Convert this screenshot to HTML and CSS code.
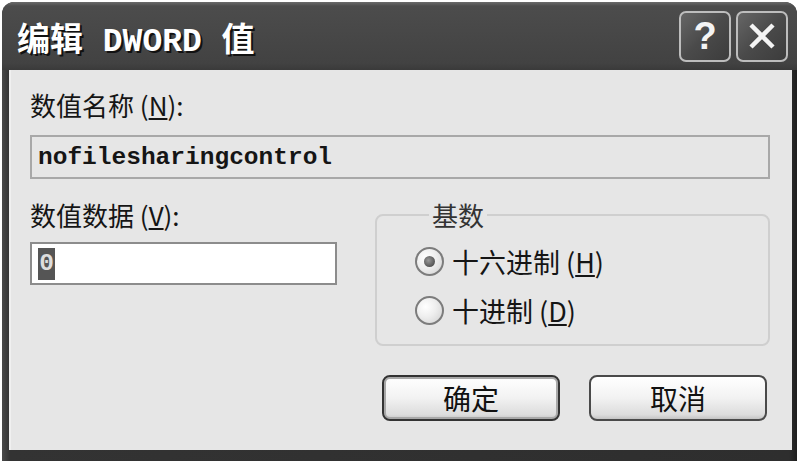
FILE: index.html
```html
<!DOCTYPE html>
<html lang="zh-CN">
<head>
  <meta charset="UTF-8" />
  <title>编辑 DWORD 值</title>
  <link rel="stylesheet" href="styles.css">
</head>
<body>
  <div class="window">
    <div class="titlebar">
      <div class="title">编辑 DWORD 值</div>
      <div class="caption-btns">
        <div class="cap-btn help">?</div>
        <div class="cap-btn close">
          <svg width="28" height="26" viewBox="0 0 28 26">
            <path d="M3 2 L25 24 M25 2 L3 24" stroke="#f4f4f4" stroke-width="4.5" fill="none"/>
          </svg>
        </div>
      </div>
    </div>
    <div class="client">
      <div class="label">数值名称 (<u>N</u>):</div>
      <div class="textbox readonly">nofilesharingcontrol</div>
      <div class="row">
        <div class="col-left">
          <div class="label">数值数据 (<u>V</u>):</div>
          <div class="textbox data"><span class="sel">0</span></div>
        </div>
        <fieldset class="group">
          <legend>基数</legend>
          <div class="radio"><span class="dot checked"></span><span>十六进制 (<u>H</u>)</span></div>
          <div class="radio"><span class="dot"></span><span>十进制 (<u>D</u>)</span></div>
        </fieldset>
      </div>
      <div class="buttons">
        <div class="btn default">确定</div>
        <div class="btn">取消</div>
      </div>
    </div>
  </div>
</body>
</html>
```

FILE: styles.css
```css
* {
  box-sizing: border-box;
}
body {
  margin: 0;
  background: #fff;
  font-family: "Noto Sans CJK SC", sans-serif;
  color: #151515;
}
.window {
  margin: 2px 0 0 2px;
  width: 795px;
  height: 459px;
  background: linear-gradient(90deg, #4a4a4a 0, #333 1%, #2e2e2e 99%, #1e1e1e 100%);
  border-radius: 12px 12px 0 0;
  display: flex;
  flex-direction: column;
  overflow: hidden;
}
.titlebar {
  height: 68px;
  display: flex;
  align-items: center;
  justify-content: space-between;
  padding: 0 9px 0 15px;
  background: linear-gradient(#6a6a6a 0, #4c4c4c 6%, #474747 50%, #424242 90%, #3a3a3a 100%);
}
.title {
  font-family: "Liberation Mono", "Noto Sans CJK SC", monospace;
  font-weight: bold;
  font-size: 33px;
  color: #fff;
  text-shadow: 2px 2px 0 #111;
  white-space: pre;
  margin-top: 2px;
}
.caption-btns {
  display: flex;
  gap: 5px;
}
.cap-btn {
  width: 52px;
  height: 51px;
  border: 2px solid #bdbdbd;
  border-radius: 7px;
  background: linear-gradient(135deg, #666 0, #4a4a4a 50%, #3c3c3c 100%);
  display: flex;
  align-items: center;
  justify-content: center;
  color: #f4f4f4;
}
.help {
  font-family: "Liberation Sans", sans-serif;
  font-weight: bold;
  font-size: 38px;
}
.client {
  flex: 1;
  margin: 0 5px 11px 7px;
  background: #e6e6e6;
  border-left: 2px solid #f0f0f0;
  padding: 19px 22px 0 19px;
}
.label {
  font-size: 26px;
  line-height: 32px;
}
.label u, .radio u {
  text-underline-offset: 2px;
}
.textbox {
  height: 44px;
  margin-top: 14px;
  border: 2px solid #a8a8a8;
  display: flex;
  align-items: center;
  padding-left: 6px;
  font-family: "Liberation Mono", monospace;
  font-weight: bold;
  font-size: 24.5px;
}
.readonly {
  background: #e6e6e6;
}
.row {
  display: flex;
  margin-top: 20px;
}
.col-left {
  width: 307px;
}
.data {
  height: 43px;
  margin-top: 11px;
  background: #fff;
  border-color: #8c8c8c;
  padding-left: 6px;
}
.sel {
  display: inline-flex;
  align-items: center;
  justify-content: center;
  width: 17px;
  height: 32px;
  background: #555;
  color: #ddd;
}
.group {
  margin: 0 0 0 38px;
  width: 395px;
  height: 147px;
  border: 2px solid #cfcfcf;
  border-radius: 8px;
  padding: 6px 0 0 38px;
}
.group legend {
  font-size: 26px;
  line-height: 32px;
  padding: 0 3px;
  margin-left: 14px;
  color: #333;
}
.radio {
  display: flex;
  align-items: center;
  gap: 8px;
  height: 49px;
  font-size: 27px;
}
.dot {
  width: 29px;
  height: 29px;
  border-radius: 50%;
  border: 2px solid #7c7c7c;
  background: radial-gradient(circle at 35% 35%, #fff 0, #eee 45%, #cfcfcf 100%);
  display: flex;
  align-items: center;
  justify-content: center;
}
.dot.checked::after {
  content: "";
  width: 11px;
  height: 11px;
  border-radius: 50%;
  background: radial-gradient(circle at 40% 40%, #999 0, #555 70%);
}
.buttons {
  display: flex;
  justify-content: flex-end;
  gap: 29px;
  margin-top: 29px;
  padding-right: 3px;
}
.btn {
  width: 178px;
  height: 46px;
  border: 2px solid #4a4a4a;
  border-radius: 8px;
  background: linear-gradient(#ffffff 0, #f2f2f2 50%, #dcdcdc 90%, #c4c4c4 100%);
  display: flex;
  align-items: center;
  justify-content: center;
  font-size: 28px;
  color: #111;
}
.btn.default {
  border-color: #333;
  box-shadow: inset 0 0 0 2px #a8a8a8;
}
```
